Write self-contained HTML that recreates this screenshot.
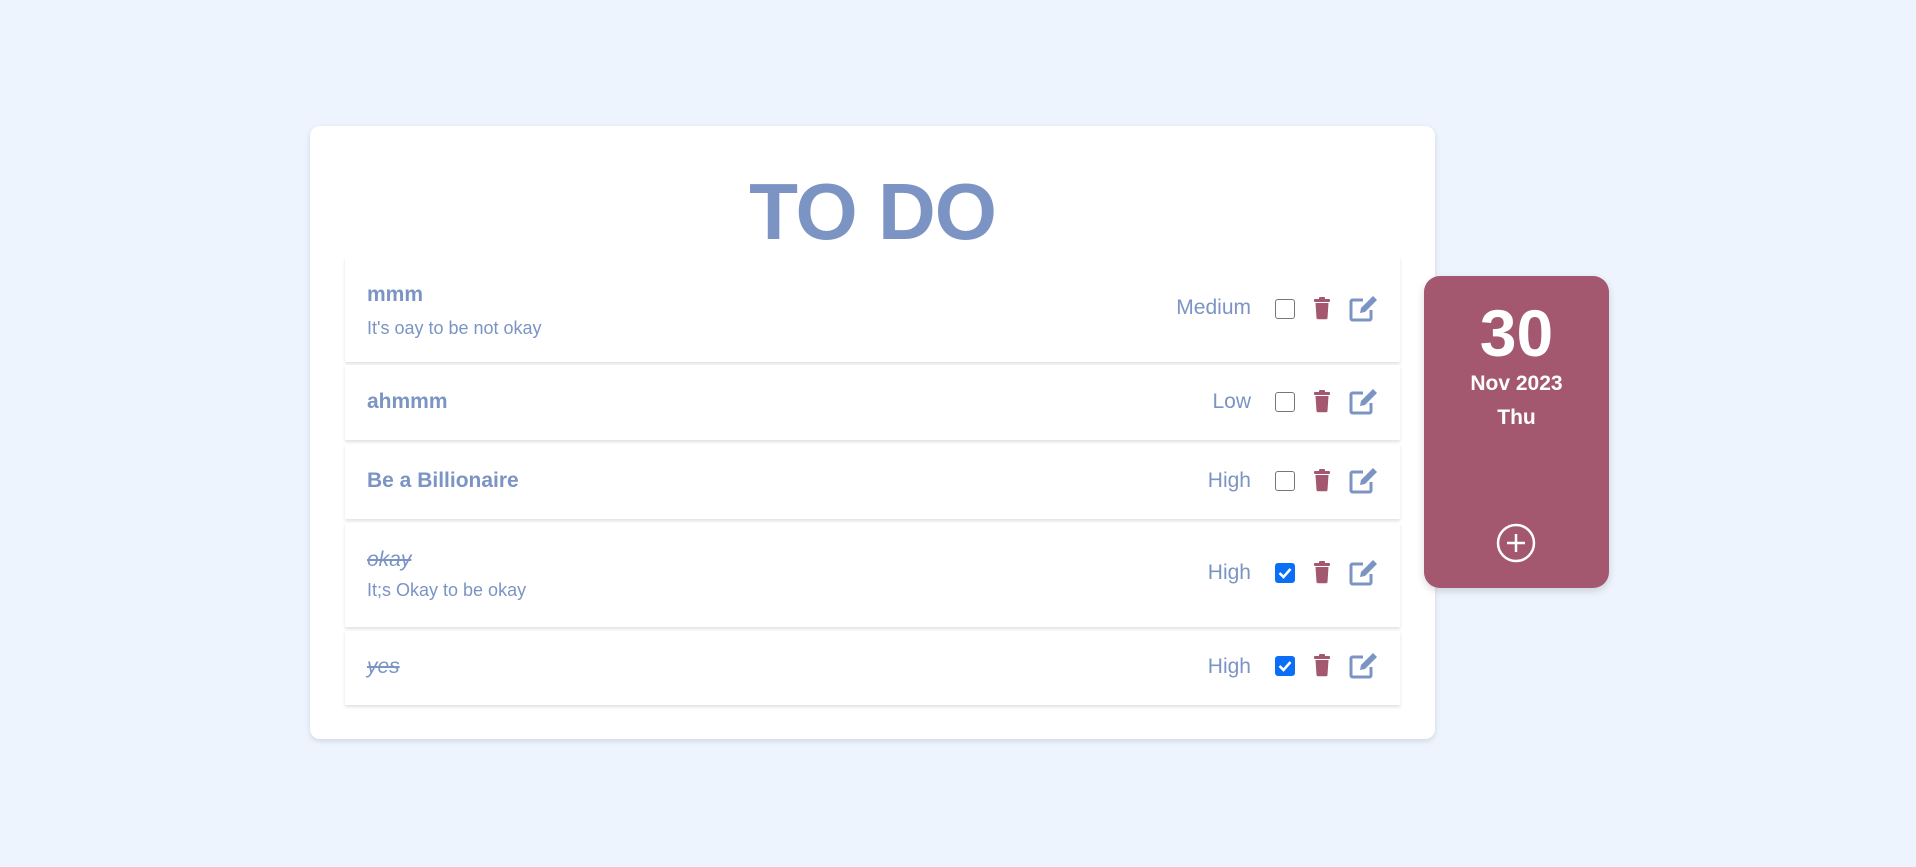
<!DOCTYPE html>
<html><head><meta charset="utf-8"><style>
body{margin:0;width:1916px;height:867px;background:#edf4fe;font-family:"Liberation Sans",sans-serif;color:#7b94c4;position:relative;overflow:hidden}
.card{position:absolute;left:310px;top:126px;width:1125px;height:613px;background:#fff;border-radius:10px;box-shadow:0 2px 6px rgba(0,0,0,.12)}
h1{position:absolute;top:172px;margin:0;text-align:center;font-size:80px;font-weight:bold;color:#7b94c4;line-height:1;letter-spacing:-1px}
.row{position:absolute;left:345px;width:1055px;background:#fff;box-shadow:0 2px 3px rgba(0,0,0,.12)}
.t{position:absolute;left:22px;font-size:21px;font-weight:bold}
.s{position:absolute;left:22px;font-size:18px}
.p{position:absolute;right:149px;font-size:21px}
.cb{position:absolute;left:930px;width:18px;height:18px;border:1.5px solid #767676;border-radius:3px;background:#fff}
.cb.on{background:#0b6ef7;border-color:#0b6ef7}
.ic{position:absolute}
.cal{position:absolute;left:1424px;top:276px;width:185px;height:312px;background:#a35870;border-radius:16px;color:#fff;text-align:center;box-shadow:0 3px 8px rgba(0,0,0,.15)}
</style></head><body>
<div class="card"></div>
<h1 style="left:310px;width:1125px">TO DO</h1>

<div class="row" style="top:257px;height:105px">
<div class="t" style="top:26px">mmm</div><div class="s" style="top:61px">It's oay to be not okay</div>
<div class="p" style="top:39px">Medium</div>
</div>
<div class="row" style="top:365px;height:75px"><div class="t" style="top:25px">ahmmm</div><div class="p" style="top:25px">Low</div></div>
<div class="row" style="top:444px;height:75px"><div class="t" style="top:25px">Be a Billionaire</div><div class="p" style="top:25px">High</div></div>
<div class="row" style="top:523px;height:104px"><div class="t" style="top:25px;font-weight:normal;font-style:italic;text-decoration:line-through">okay</div><div class="s" style="top:57px">It;s Okay to be okay</div><div class="p" style="top:38px">High</div></div>
<div class="row" style="top:631px;height:74px"><div class="t" style="top:24px;font-weight:normal;font-style:italic;text-decoration:line-through">yes</div><div class="p" style="top:24px">High</div></div>

<svg width="0" height="0" style="position:absolute"><defs>
<g id="tr"><rect x="1" y="2" width="16" height="3" rx="1" fill="#a35870"/><rect x="6" y="0" width="6" height="3" rx="1" fill="#a35870"/><path d="M2.5 6h13l-1 15a1.5 1.5 0 0 1-1.5 1.3h-8A1.5 1.5 0 0 1 3.5 21z" fill="#a35870"/></g>
<g id="ed"><path d="M14 5H3.5A1.5 1.5 0 0 0 2 6.5v17A1.5 1.5 0 0 0 3.5 25h17a1.5 1.5 0 0 0 1.5-1.5V15" fill="none" stroke="#7b94c4" stroke-width="3"/><path d="M11 18l1-5 12-12 4 4-12 12z" fill="#7b94c4"/></g>
</defs></svg>

<div style="position:absolute;left:0;top:0">
<div class="cb" style="left:1275px;top:299px"></div>
<svg class="ic" style="left:1313px;top:297px" width="18" height="23"><use href="#tr"/></svg>
<svg class="ic" style="left:1349px;top:295px" width="30" height="28"><use href="#ed"/></svg>

<div class="cb" style="left:1275px;top:392px"></div>
<svg class="ic" style="left:1313px;top:390px" width="18" height="23"><use href="#tr"/></svg>
<svg class="ic" style="left:1349px;top:388px" width="30" height="28"><use href="#ed"/></svg>

<div class="cb" style="left:1275px;top:471px"></div>
<svg class="ic" style="left:1313px;top:469px" width="18" height="23"><use href="#tr"/></svg>
<svg class="ic" style="left:1349px;top:467px" width="30" height="28"><use href="#ed"/></svg>

<div class="cb on" style="left:1275px;top:563px"><svg width="18" height="18" style="position:absolute;left:0;top:0"><path d="M3.5 9l4 4 7-8" fill="none" stroke="#fff" stroke-width="2.5"/></svg></div>
<svg class="ic" style="left:1313px;top:561px" width="18" height="23"><use href="#tr"/></svg>
<svg class="ic" style="left:1349px;top:559px" width="30" height="28"><use href="#ed"/></svg>

<div class="cb on" style="left:1275px;top:656px"><svg width="18" height="18" style="position:absolute;left:0;top:0"><path d="M3.5 9l4 4 7-8" fill="none" stroke="#fff" stroke-width="2.5"/></svg></div>
<svg class="ic" style="left:1313px;top:654px" width="18" height="23"><use href="#tr"/></svg>
<svg class="ic" style="left:1349px;top:652px" width="30" height="28"><use href="#ed"/></svg>
</div>

<div class="cal">
<div style="position:absolute;left:0;right:0;top:24px;font-size:66px;font-weight:bold;line-height:1">30</div>
<div style="position:absolute;left:0;right:0;top:96px;font-size:21px;font-weight:bold">Nov 2023</div>
<div style="position:absolute;left:0;right:0;top:130px;font-size:21px;font-weight:bold">Thu</div>
<svg style="position:absolute;left:72px;top:247px" width="40" height="40"><circle cx="20" cy="20" r="18" fill="none" stroke="#fff" stroke-width="2.5"/><path d="M20 11v18M11 20h18" stroke="#fff" stroke-width="2.5"/></svg>
</div>
</body></html>
